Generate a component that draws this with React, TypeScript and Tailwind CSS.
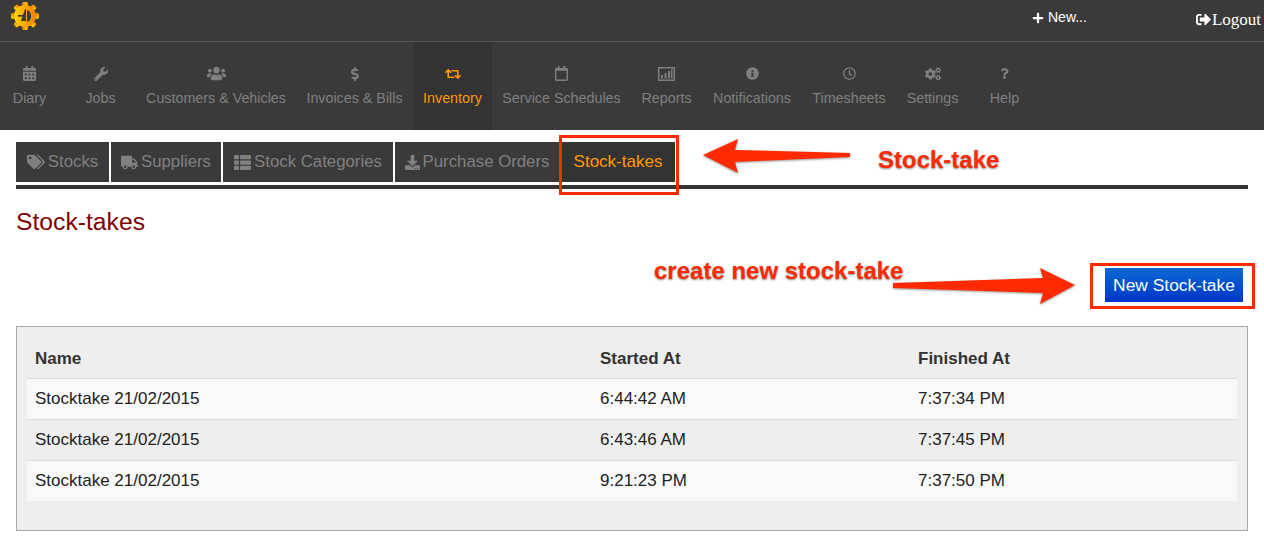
import React from "react";
import {
  FaCalendarAlt,
  FaWrench,
  FaUsers,
  FaDollarSign,
  FaRetweet,
  FaRegCalendar,
  FaInfoCircle,
  FaRegClock,
  FaCogs,
  FaQuestion,
  FaTags,
  FaTruck,
  FaThList,
  FaDownload,
  FaPlus,
  FaSignOutAlt,
} from "react-icons/fa";

function ReportIcon() {
  return (
    <svg width="17" height="14" viewBox="0 0 17 14" fill="currentColor">
      <path d="M0 0h17v14H0V0zm1.5 1.5v11h14v-11h-14z" fillRule="evenodd" />
      <rect x="3" y="8" width="2" height="3.5" />
      <rect x="6.5" y="6" width="2" height="5.5" />
      <rect x="10" y="4" width="2" height="7.5" />
      <rect x="13" y="2.5" width="1.5" height="9" />
    </svg>
  );
}

const navItems = [
  { label: "Diary", width: "w-[71px]", icon: <FaCalendarAlt className="text-[15px]" /> },
  { label: "Jobs", width: "w-[71px]", icon: <FaWrench className="text-[14px]" /> },
  { label: "Customers & Vehicles", width: "w-[160px]", icon: <FaUsers className="text-[19px]" /> },
  { label: "Invoices & Bills", width: "w-[117px]", icon: <FaDollarSign className="text-[14px]" /> },
  { label: "Inventory", width: "w-[79px]", icon: <FaRetweet className="text-[16px]" />, active: true },
  { label: "Service Schedules", width: "w-[139px]", icon: <FaRegCalendar className="text-[15px]" /> },
  { label: "Reports", width: "w-[71px]", icon: <ReportIcon /> },
  { label: "Notifications", width: "w-[100px]", icon: <FaInfoCircle className="text-[13px]" /> },
  { label: "Timesheets", width: "w-[94px]", icon: <FaRegClock className="text-[13px]" /> },
  { label: "Settings", width: "w-[73px]", icon: <FaCogs className="text-[16px]" /> },
  { label: "Help", width: "w-[71px]", icon: <FaQuestion className="text-[11px]" /> },
];

const tabs = [
  { label: "Stocks", icon: <FaTags className="text-[18px]" />, width: "w-[93px]" },
  { label: "Suppliers", icon: <FaTruck className="text-[17px]" />, width: "w-[110px]" },
  { label: "Stock Categories", icon: <FaThList className="text-[17px]" />, width: "w-[170px]" },
  { label: "Purchase Orders", icon: <FaDownload className="text-[15px]" />, width: "w-[164px]" },
];

const rows = [
  { name: "Stocktake 21/02/2015", started: "6:44:42 AM", finished: "7:37:34 PM", striped: true },
  { name: "Stocktake 21/02/2015", started: "6:43:46 AM", finished: "7:37:45 PM", striped: false },
  { name: "Stocktake 21/02/2015", started: "9:21:23 PM", finished: "7:37:50 PM", striped: true },
];

function Logo() {
  const teeth = [0, 45, 90, 135, 180, 225, 270, 315];
  return (
    <svg width="30" height="32" viewBox="0 0 30 32">
      <defs>
        <linearGradient id="gearFill" x1="0" y1="0" x2="1" y2="0">
          <stop offset="0" stopColor="#ffd400" />
          <stop offset="1" stopColor="#f77f00" />
        </linearGradient>
      </defs>
      <g fill="url(#gearFill)">
        {teeth.map((deg) => (
          <rect key={deg} x="12.5" y="2" width="5" height="28" rx="1" transform={`rotate(${deg} 15 16)`} />
        ))}
        <circle cx="15" cy="16" r="11" />
      </g>
      <path d="M11 21 L15 9 L16 9 L16 21 Z" fill="#3a3a3a" />
      <path d="M17 10 C22 11 23 20 17 22 Z" fill="#3a3a3a" />
      <rect x="8" y="15" width="8" height="1.6" fill="#3a3a3a" />
    </svg>
  );
}

export default function App() {
  return (
    <div className="relative h-[553px] w-[1264px] overflow-hidden bg-white font-['Liberation_Sans',Arial,sans-serif]">
      {/* top bar */}
      <header className="flex h-[42px] items-start justify-between border-b border-[#565656] bg-[#3a3a3a] pl-[10px] text-white">
        <Logo />
        <div className="flex items-start">
          <span className="mt-[9px] flex items-center gap-[4px] text-[14px] leading-[17px]">
            <FaPlus className="text-[12px]" />
            New...
          </span>
          <span className="ml-[109px] mr-[3px] mt-[10px] flex items-center gap-[1px] font-['Liberation_Serif',serif] text-[17px] leading-[19px]">
            <FaSignOutAlt className="text-[15px]" />
            Logout
          </span>
        </div>
      </header>

      {/* main nav */}
      <nav className="flex h-[88px] bg-[#3a3a3a]">
        <div className="-ml-[6px] flex">
          {navItems.map((item) => (
            <div
              key={item.label}
              className={`flex flex-col items-center pt-[23px] text-[14.3px] leading-[20px] ${item.width} ${
                item.active ? "bg-[#333333] text-[#ff9900]" : "text-[#7f7f7f]"
              }`}
            >
              <span className="flex h-[17px] items-center">{item.icon}</span>
              <span className="mt-[6px] whitespace-nowrap">{item.label}</span>
            </div>
          ))}
        </div>
      </nav>

      {/* tabs */}
      <div className="mx-4 mt-3 border-b-4 border-[#333333] pb-[3px]">
        <div className="flex h-10 gap-[2px]">
          {tabs.map((tab) => (
            <div
              key={tab.label}
              className={`flex items-center justify-center gap-[3px] bg-[#3a3a3a] text-[16.8px] text-[#808080] ${tab.width}`}
            >
              {tab.icon}
              {tab.label}
            </div>
          ))}
          <div className="flex w-[114px] items-center justify-center bg-[#333333] text-[17px] text-[#ff9900]">
            Stock-takes
          </div>
        </div>
      </div>

      <h1 className="mx-4 mt-[19px] text-[24.7px] leading-[27px] text-[#800000]">Stock-takes</h1>

      {/* action */}
      <div className="mx-4 mt-[33px] flex justify-end pr-[5px]">
        <button className="h-[34px] w-[138px] bg-gradient-to-b from-[#1268d2] to-[#0033c8] pt-px text-[17.4px] text-white">
          New Stock-take
        </button>
      </div>

      {/* table */}
      <div className="mx-4 mt-6 h-[205px] border border-[#aaaaaa] bg-[#eeeeee] px-[10px] pt-[11px]">
        <table className="w-full table-fixed border-collapse text-left text-[17px] text-[#222222]">
          <colgroup>
            <col className="w-[565px]" />
            <col className="w-[318px]" />
            <col />
          </colgroup>
          <thead>
            <tr className="h-[40px] text-[#333333]">
              <th className="px-2 pt-[2px] font-bold">Name</th>
              <th className="px-2 pt-[2px] font-bold">Started At</th>
              <th className="px-2 pt-[2px] font-bold">Finished At</th>
            </tr>
          </thead>
          <tbody>
            {rows.map((row) => (
              <tr key={row.started} className={`h-[41px] border-t border-[#dddddd] ${row.striped ? "bg-[#f9f9f9]" : ""}`}>
                <td className="px-2">{row.name}</td>
                <td className="px-2">{row.started}</td>
                <td className="px-2">{row.finished}</td>
              </tr>
            ))}
          </tbody>
        </table>
      </div>

      {/* annotations drawn over the screenshot */}
      <div className="absolute left-[559px] top-[135px] h-[60px] w-[120px] border-[3px] border-[#ff2a00]" />
      <div className="absolute left-[1090px] top-[263px] h-[46px] w-[165px] border-[3px] border-[#ff2a00]" />
      <svg className="absolute left-0 top-0 drop-shadow-[0_1px_1px_#999]" width="1264" height="553">
        <path d="M703 155 L738 139 L735 150 L850 153 L850 157 L735 162 L738 173 Z" fill="#ff2a00" />
        <path d="M893 283 L1043 278 L1040 268 L1075 285 L1040 304 L1043 293 L893 288 Z" fill="#ff2a00" />
      </svg>
      <span className="absolute left-[878px] top-[146px] text-[24px] font-bold leading-[27px] text-[#ff2a00] [text-shadow:0_1px_2px_#888]">
        Stock-take
      </span>
      <span className="absolute left-[654px] top-[257px] text-[24px] font-bold leading-[27px] text-[#ff2a00] [text-shadow:0_1px_2px_#888]">
        create new stock-take
      </span>
    </div>
  );
}
